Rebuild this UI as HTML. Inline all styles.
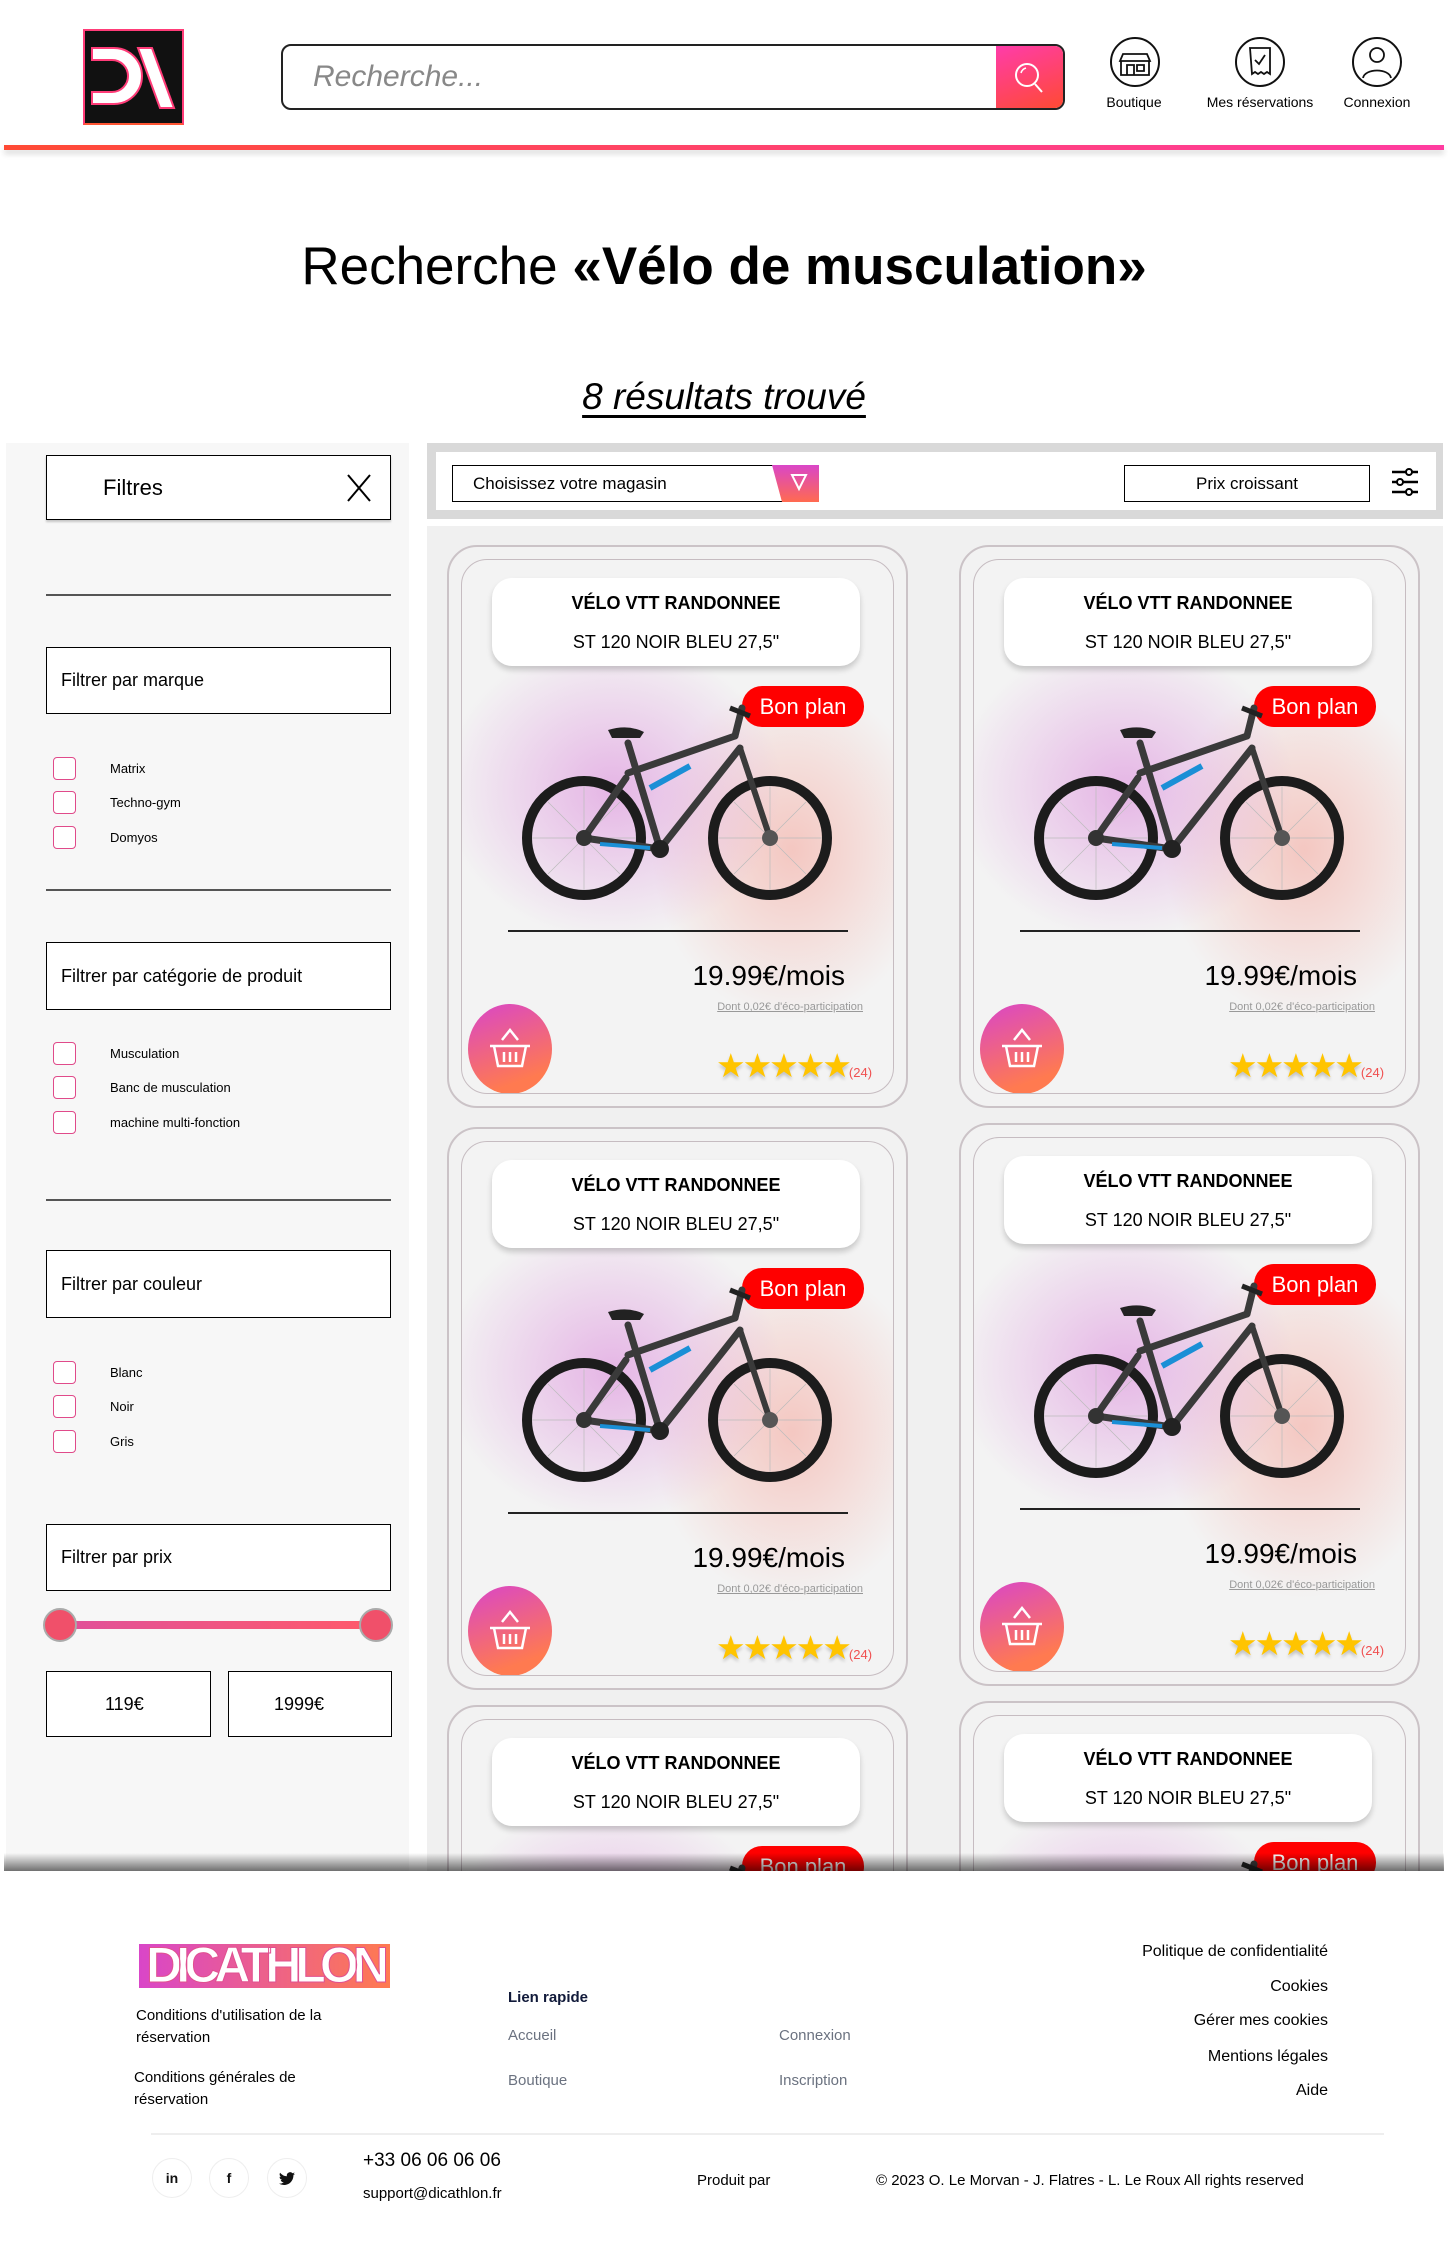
<!DOCTYPE html>
<html><head><meta charset="utf-8">
<style>
*{margin:0;padding:0;box-sizing:border-box}
body{width:1448px;height:2250px;position:relative;background:#fff;font-family:"Liberation Sans",sans-serif;color:#000;overflow:hidden}
.a{position:absolute}
.ico{position:absolute;text-align:center;font-size:14px}
.box{position:absolute;border:1.5px solid #000;background:#fff;font-size:18px;padding-left:14px;display:flex;align-items:center}
.hr{position:absolute;left:46px;width:345px;height:1.5px;background:#555}
.cb{position:absolute;left:53px;width:23px;height:23px;border:1.5px solid #e04a8a;border-radius:4px;background:#fff}
.cbl{position:absolute;left:110px;font-size:13px}
.card{position:absolute;width:461px;height:563px;border:2px solid #cbc3c7;border-radius:30px;background:#f2f2f2}
.inner{position:absolute;left:12px;top:12px;right:12px;bottom:12px;border:1.5px solid #c6bcc1;border-radius:26px;overflow:hidden;
background:radial-gradient(ellipse 170px 150px at 150px 230px,rgba(220,140,220,.6),rgba(220,140,220,0) 100%),radial-gradient(ellipse 140px 170px at 330px 290px,rgba(245,170,160,.6),rgba(245,170,160,0) 100%),#f3f3f3}
.ttl{position:absolute;left:30px;top:18px;width:368px;height:88px;background:#fff;border-radius:20px;box-shadow:0 4px 6px rgba(0,0,0,.18);text-align:center;font-size:18px}
.ttl b{display:block;margin-top:15px;font-size:18px}
.ttl span{display:block;margin-top:18px}
.pill{position:absolute;left:280px;top:126px;width:122px;height:41px;background:#f00;border-radius:20px;color:#fff;font-size:22px;text-align:center;line-height:41px}
.line{position:absolute;left:46px;top:370px;width:340px;height:1.5px;background:#222}
.price{position:absolute;right:48px;top:400px;font-size:28px}
.eco{position:absolute;right:30px;top:441px;font-size:11px;color:#999;text-decoration:underline}
.bask{position:absolute;left:6px;top:444px;width:84px;height:90px;border-radius:50%;background:linear-gradient(160deg,#d946c8,#ff7a50 80%)}
.stars{position:absolute;left:254px;top:486px;font-size:33px;color:#ffc400;letter-spacing:-3px;text-shadow:0 3px 3px rgba(0,0,0,.2)}
.stars i{font-style:normal;font-size:13px;color:#f05050;letter-spacing:0;text-shadow:none}
.fl{position:absolute;font-size:15px;color:#6b7280}
.fr{position:absolute;right:120px;font-size:16px;text-align:right}
.soc{position:absolute;top:2158px;width:40px;height:40px;border-radius:50%;border:1.5px solid #eee;text-align:center;line-height:38px;font-size:14px;font-weight:bold;color:#111}
</style></head><body>

<div class="a" style="left:83px;top:29px;width:101px;height:96px;background:#111;border:2px solid #ff3c78;border-bottom-color:#ff5533"></div>
<svg class="a" style="left:88px;top:40px" width="92" height="78" viewBox="0 0 92 78"><path d="M4 8h22a26 26 0 0 1 0 56H4v-12h20a14 14 0 0 0 0-32H4z" fill="#fff" stroke="#ff3c78" stroke-width="2"/><path d="M50 8h14l22 60H72z" fill="#fff" stroke="#ff3c78" stroke-width="2"/></svg>

<div class="a" style="left:281px;top:44px;width:784px;height:66px;border:2px solid #222;border-radius:10px;overflow:hidden">
 <div class="a" style="left:30px;top:14px;font-size:30px;color:#888;font-style:italic">Recherche...</div>
 <div class="a" style="right:0;top:0;width:67px;height:64px;background:linear-gradient(160deg,#ff3caa,#ff4a30)"></div>
 <svg class="a" style="right:18px;top:15px" width="32" height="34"><circle cx="14" cy="14" r="11" fill="none" stroke="#fff" stroke-width="2"/><path d="M22 23l7 8" stroke="#fff" stroke-width="2"/><path d="M8 12a7 7 0 0 1 5-5" stroke="#fff" stroke-width="1.5" fill="none"/></svg>
</div>

<svg class="a" style="left:1109px;top:36px" width="52" height="52"><circle cx="26" cy="26" r="24" fill="none" stroke="#111" stroke-width="2"/><path d="M14 18h24l3 7H11z M12 25v14h28V25 M18 39V29h7v10 M28 29h7v6h-7z" fill="none" stroke="#111" stroke-width="1.8"/></svg>
<div class="ico" style="left:1094px;top:94px;width:80px">Boutique</div>
<svg class="a" style="left:1234px;top:36px" width="52" height="52"><circle cx="26" cy="26" r="24" fill="none" stroke="#111" stroke-width="2"/><path d="M16 12h20v26l-3-2-3 2-3-2-3 2-3-2-3 2z" fill="none" stroke="#111" stroke-width="1.8"/><path d="M21 24l4 4 6-9" fill="none" stroke="#111" stroke-width="1.8"/></svg>
<div class="ico" style="left:1190px;top:94px;width:140px">Mes réservations</div>
<svg class="a" style="left:1351px;top:36px" width="52" height="52"><circle cx="26" cy="26" r="24" fill="none" stroke="#111" stroke-width="2"/><circle cx="26" cy="19" r="7" fill="none" stroke="#111" stroke-width="1.8"/><path d="M12 42c2-10 26-10 28 0" fill="none" stroke="#111" stroke-width="1.8"/></svg>
<div class="ico" style="left:1337px;top:94px;width:80px">Connexion</div>

<div class="a" style="left:4px;top:145px;width:1440px;height:5px;background:linear-gradient(90deg,#ff4a35,#ff3ca0);box-shadow:0 4px 6px rgba(0,0,0,.15)"></div>

<div class="a" style="left:0;top:236px;width:1448px;text-align:center;font-size:53px">Recherche <b>«Vélo de musculation»</b></div>
<div class="a" style="left:0;top:376px;width:1448px;text-align:center;font-size:37px;font-style:italic"><span style="text-decoration:underline;text-decoration-thickness:3px;text-underline-offset:6px">8 résultats trouvé</span></div>

<div class="a" style="left:6px;top:443px;width:403px;height:1428px;background:#f7f7f7"></div>
<div class="box" style="left:46px;top:455px;width:345px;height:65px;font-size:22px;padding-left:56px;box-shadow:0 2px 2px rgba(0,0,0,.2)">Filtres</div>
<svg class="a" style="left:345px;top:473px" width="28" height="30"><path d="M3 2l22 26M25 2L3 28" stroke="#000" stroke-width="2"/></svg>
<div class="hr" style="top:594px"></div>
<div class="box" style="left:46px;top:647px;width:345px;height:67px">Filtrer par marque</div>
<div class="cb" style="top:757px"></div><div class="cbl" style="top:761px">Matrix</div>
<div class="cb" style="top:791px"></div><div class="cbl" style="top:795px">Techno-gym</div>
<div class="cb" style="top:826px"></div><div class="cbl" style="top:830px">Domyos</div>
<div class="hr" style="top:889px"></div>
<div class="box" style="left:46px;top:942px;width:345px;height:68px">Filtrer par catégorie de produit</div>
<div class="cb" style="top:1042px"></div><div class="cbl" style="top:1046px">Musculation</div>
<div class="cb" style="top:1076px"></div><div class="cbl" style="top:1080px">Banc de musculation</div>
<div class="cb" style="top:1111px"></div><div class="cbl" style="top:1115px">machine multi-fonction</div>
<div class="hr" style="top:1199px"></div>
<div class="box" style="left:46px;top:1250px;width:345px;height:68px">Filtrer par couleur</div>
<div class="cb" style="top:1361px"></div><div class="cbl" style="top:1365px">Blanc</div>
<div class="cb" style="top:1395px"></div><div class="cbl" style="top:1399px">Noir</div>
<div class="cb" style="top:1430px"></div><div class="cbl" style="top:1434px">Gris</div>
<div class="box" style="left:46px;top:1524px;width:345px;height:67px">Filtrer par prix</div>
<div class="a" style="left:60px;top:1621px;width:316px;height:8px;background:linear-gradient(90deg,#e0509a,#ff5a6a)"></div>
<div class="a" style="left:43px;top:1608px;width:34px;height:34px;border-radius:50%;background:#f0506a;border:2px solid #aaa"></div>
<div class="a" style="left:359px;top:1608px;width:34px;height:34px;border-radius:50%;background:#f0506a;border:2px solid #aaa"></div>
<div class="box" style="left:46px;top:1671px;width:165px;height:66px;padding-left:58px">119€</div>
<div class="box" style="left:228px;top:1671px;width:164px;height:66px;padding-left:45px">1999€</div>

<div class="a" style="left:427px;top:443px;width:1016px;height:76px;background:#d9d9d9"></div>
<div class="a" style="left:436px;top:452px;width:1000px;height:58px;background:#fff"></div>
<div class="box" style="left:452px;top:465px;width:367px;height:37px;font-size:17px;padding-left:20px">Choisissez votre magasin</div>
<svg class="a" style="left:772px;top:465px" width="48" height="37"><path d="M0 0h47v37H10z" fill="url(#g1)"/><defs><linearGradient id="g1" x1="0" y1="0" x2="0" y2="1"><stop offset="0" stop-color="#d946c8"/><stop offset="1" stop-color="#ff6a50"/></linearGradient></defs><path d="M20 10h14l-7 14z" fill="none" stroke="#fff" stroke-width="2"/></svg>
<div class="box" style="left:1124px;top:465px;width:246px;height:37px;font-size:17px;justify-content:center;padding:0">Prix croissant</div>
<svg class="a" style="left:1390px;top:466px" width="30" height="32"><g stroke="#000" stroke-width="2.5"><path d="M2 6h26M2 16h26M2 26h26"/></g><g fill="#fff" stroke="#000" stroke-width="2"><circle cx="19" cy="6" r="3"/><circle cx="10" cy="16" r="3"/><circle cx="19" cy="26" r="3"/></g></svg>

<div class="a" style="left:427px;top:526px;width:1016px;height:1345px;background:#f0f0f0;overflow:hidden">
<svg width="0" height="0" style="position:absolute"><defs>
<g id="bike">
 <circle cx="134" cy="290" r="57" fill="none" stroke="#1c1c1c" stroke-width="10"/>
 <circle cx="320" cy="290" r="57" fill="none" stroke="#1c1c1c" stroke-width="10"/>
 <g stroke="#bbb" stroke-width=".7"><path d="M134 238V342M82 290H186M98 254l72 72M170 254l-72 72M320 238V342M268 290H372M284 254l72 72M356 254l-72 72"/></g>
 <g stroke="#3a3a3a" stroke-width="7" fill="none" stroke-linecap="round"><path d="M210 301L178 195M210 301L290 200M178 225L285 188M134 290L210 301M134 290L176 230"/><path d="M290 200L320 290" stroke-width="6"/><path d="M285 188L292 160"/></g>
 <path d="M200 240L240 218" stroke="#1a8fd6" stroke-width="6"/><path d="M150 296L200 300" stroke="#1a8fd6" stroke-width="4"/>
 <path d="M158 182q20-6 36 2l-4 6h-28z" fill="#222"/>
 <path d="M280 160l20 8" stroke="#222" stroke-width="5"/>
 <circle cx="210" cy="301" r="9" fill="#222"/><circle cx="134" cy="290" r="8" fill="#333"/><circle cx="320" cy="290" r="8" fill="#555"/>
</g>
</defs></svg>
</div>

<div class="a" style="left:0;top:0;width:1448px;height:1871px;overflow:hidden;pointer-events:none">
<div class="card" style="left:447px;top:545px"><div class="inner"><div class="ttl"><b>VÉLO VTT RANDONNEE</b><span>ST 120 NOIR BLEU 27,5"</span></div><div class="pill">Bon plan</div><svg class="a" style="left:-12px;top:-12px" width="461" height="563"><use href="#bike"/></svg><div class="line"></div><div class="price">19.99€/mois</div><div class="eco">Dont 0,02€ d'éco-participation</div><div class="bask"><svg width="84" height="90"><path d="M26 42h32l-4 20H30z M22 42h40 M34 36l8-10 8 10 M36 48v10M42 48v10M48 48v10" fill="none" stroke="#fff" stroke-width="2.5"/></svg></div><div class="stars">★★★★★<i>(24)</i></div></div></div>
<div class="card" style="left:959px;top:545px"><div class="inner"><div class="ttl"><b>VÉLO VTT RANDONNEE</b><span>ST 120 NOIR BLEU 27,5"</span></div><div class="pill">Bon plan</div><svg class="a" style="left:-12px;top:-12px" width="461" height="563"><use href="#bike"/></svg><div class="line"></div><div class="price">19.99€/mois</div><div class="eco">Dont 0,02€ d'éco-participation</div><div class="bask"><svg width="84" height="90"><path d="M26 42h32l-4 20H30z M22 42h40 M34 36l8-10 8 10 M36 48v10M42 48v10M48 48v10" fill="none" stroke="#fff" stroke-width="2.5"/></svg></div><div class="stars">★★★★★<i>(24)</i></div></div></div>
<div class="card" style="left:447px;top:1127px"><div class="inner"><div class="ttl"><b>VÉLO VTT RANDONNEE</b><span>ST 120 NOIR BLEU 27,5"</span></div><div class="pill">Bon plan</div><svg class="a" style="left:-12px;top:-12px" width="461" height="563"><use href="#bike"/></svg><div class="line"></div><div class="price">19.99€/mois</div><div class="eco">Dont 0,02€ d'éco-participation</div><div class="bask"><svg width="84" height="90"><path d="M26 42h32l-4 20H30z M22 42h40 M34 36l8-10 8 10 M36 48v10M42 48v10M48 48v10" fill="none" stroke="#fff" stroke-width="2.5"/></svg></div><div class="stars">★★★★★<i>(24)</i></div></div></div>
<div class="card" style="left:959px;top:1123px"><div class="inner"><div class="ttl"><b>VÉLO VTT RANDONNEE</b><span>ST 120 NOIR BLEU 27,5"</span></div><div class="pill">Bon plan</div><svg class="a" style="left:-12px;top:-12px" width="461" height="563"><use href="#bike"/></svg><div class="line"></div><div class="price">19.99€/mois</div><div class="eco">Dont 0,02€ d'éco-participation</div><div class="bask"><svg width="84" height="90"><path d="M26 42h32l-4 20H30z M22 42h40 M34 36l8-10 8 10 M36 48v10M42 48v10M48 48v10" fill="none" stroke="#fff" stroke-width="2.5"/></svg></div><div class="stars">★★★★★<i>(24)</i></div></div></div>
<div class="card" style="left:447px;top:1705px"><div class="inner"><div class="ttl"><b>VÉLO VTT RANDONNEE</b><span>ST 120 NOIR BLEU 27,5"</span></div><div class="pill">Bon plan</div><svg class="a" style="left:-12px;top:-12px" width="461" height="563"><use href="#bike"/></svg></div></div>
<div class="card" style="left:959px;top:1701px"><div class="inner"><div class="ttl"><b>VÉLO VTT RANDONNEE</b><span>ST 120 NOIR BLEU 27,5"</span></div><div class="pill">Bon plan</div><svg class="a" style="left:-12px;top:-12px" width="461" height="563"><use href="#bike"/></svg></div></div>
<div class="a" style="left:4px;top:1853px;width:1440px;height:18px;background:linear-gradient(180deg,rgba(0,0,0,0),rgba(0,0,0,.55))"></div>
</div>

<div class="a" style="left:139px;top:1944px;width:251px;height:44px;background:linear-gradient(90deg,#d946c8,#ff7a50)"></div>
<div class="a" style="left:139px;top:1938px;width:251px;height:54px;font-size:50px;font-weight:bold;color:#fff;letter-spacing:-6px;text-align:center;line-height:54px;-webkit-text-stroke:1px #e05090">DICATHLON</div>
<div class="a" style="left:136px;top:2005px;font-size:15px;line-height:22px">Conditions d'utilisation de la<br>réservation</div>
<div class="a" style="left:134px;top:2067px;font-size:15px;line-height:22px">Conditions générales de<br>réservation</div>
<div class="a" style="left:508px;top:1989px;font-size:15px;font-weight:bold;color:#111a3a">Lien rapide</div>
<div class="fl" style="left:508px;top:2027px">Accueil</div>
<div class="fl" style="left:508px;top:2072px">Boutique</div>
<div class="fl" style="left:779px;top:2027px">Connexion</div>
<div class="fl" style="left:779px;top:2072px">Inscription</div>
<div class="fr" style="top:1943px">Politique de confidentialité</div>
<div class="fr" style="top:1978px">Cookies</div>
<div class="fr" style="top:2012px">Gérer mes cookies</div>
<div class="fr" style="top:2048px">Mentions légales</div>
<div class="fr" style="top:2082px">Aide</div>
<div class="a" style="left:151px;top:2133px;width:1233px;height:2px;background:#eee"></div>
<div class="soc" style="left:152px">in</div>
<div class="soc" style="left:209px">f</div>
<div class="soc" style="left:267px"><svg width="16" height="14" viewBox="0 0 16 14" style="vertical-align:middle"><path d="M16 1.7a6.5 6.5 0 0 1-1.9.5A3.3 3.3 0 0 0 15.6.4a6.6 6.6 0 0 1-2.1.8A3.3 3.3 0 0 0 7.9 4.2 9.3 9.3 0 0 1 1.1.7a3.3 3.3 0 0 0 1 4.4 3.3 3.3 0 0 1-1.5-.4 3.3 3.3 0 0 0 2.6 3.2 3.3 3.3 0 0 1-1.5.1 3.3 3.3 0 0 0 3.1 2.3A6.6 6.6 0 0 1 0 11.6 9.3 9.3 0 0 0 5 13c6 0 9.4-5 9.4-9.4v-.4A6.7 6.7 0 0 0 16 1.7z" fill="#111"/></svg></div>
<div class="a" style="left:363px;top:2150px;font-size:19px">+33 06 06 06 06</div>
<div class="a" style="left:363px;top:2185px;font-size:15px">support@dicathlon.fr</div>
<div class="a" style="left:697px;top:2172px;font-size:15px">Produit par</div>
<div class="a" style="left:876px;top:2172px;font-size:15px">© 2023 O. Le Morvan - J. Flatres - L. Le Roux All rights reserved</div>
</body></html>
